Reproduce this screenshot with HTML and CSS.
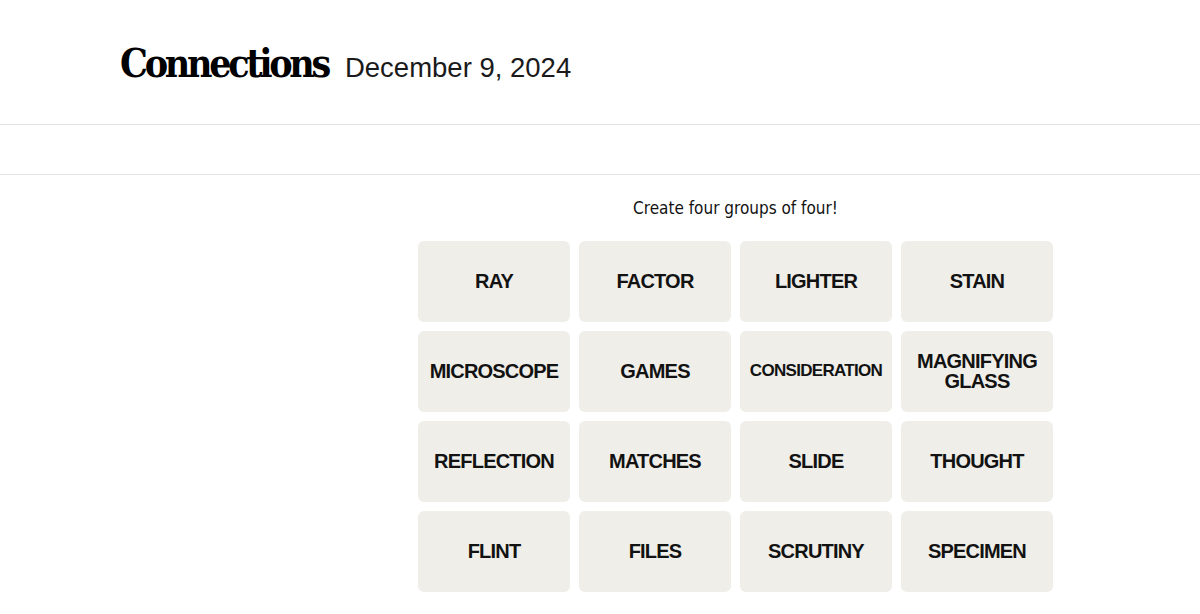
FILE: index.html
```html
<!DOCTYPE html>
<html lang="en">
<head>
<meta charset="utf-8">
<title>Connections</title>
<link rel="stylesheet" href="styles.css">
</head>
<body>
<header class="masthead">
  <div class="masthead-inner">
    <h1 class="title">Connections</h1>
    <span class="date">December 9, 2024</span>
  </div>
</header>
<div class="toolbar"></div>
<main class="board">
  <p class="prompt">Create four groups of four!</p>
  <div class="grid">
    <div class="tile">RAY</div>
    <div class="tile">FACTOR</div>
    <div class="tile">LIGHTER</div>
    <div class="tile">STAIN</div>
    <div class="tile">MICROSCOPE</div>
    <div class="tile">GAMES</div>
    <div class="tile tile-small">CONSIDERATION</div>
    <div class="tile">MAGNIFYING<br>GLASS</div>
    <div class="tile">REFLECTION</div>
    <div class="tile">MATCHES</div>
    <div class="tile">SLIDE</div>
    <div class="tile">THOUGHT</div>
    <div class="tile">FLINT</div>
    <div class="tile">FILES</div>
    <div class="tile">SCRUTINY</div>
    <div class="tile">SPECIMEN</div>
  </div>
</main>
</body>
</html>
```
FILE: styles.css
```css
* { box-sizing: border-box; }
html, body {
  margin: 0;
  padding: 0;
  background: #ffffff;
  color: #121212;
  font-family: "Liberation Sans", Arial, sans-serif;
}
.masthead {
  height: 125px;
  border-bottom: 1px solid #e3e3e3;
}
.masthead-inner {
  display: flex;
  align-items: baseline;
  padding: 41px 0 0 120px;
  gap: 17px;
}
.title {
  margin: 0;
  font-family: "DejaVu Serif", "Liberation Serif", serif;
  font-stretch: condensed;
  font-weight: 700;
  font-size: 39px;
  line-height: 44px;
  letter-spacing: -3.3px;
  color: #000;
}
.date {
  font-family: "Liberation Sans", Arial, sans-serif;
  font-size: 27.5px;
  line-height: 44px;
  color: #1a1a1a;
}
.toolbar {
  height: 50px;
  border-bottom: 1px solid #e3e3e3;
}
.board {
  width: 635px;
  margin-left: 418px;
  padding-top: 21px;
}
.prompt {
  margin: 0 0 21px;
  text-align: center;
  font-family: "DejaVu Sans", sans-serif;
  font-stretch: condensed;
  font-size: 17px;
  line-height: 24px;
  color: #121212;
}
.grid {
  display: grid;
  grid-template-columns: repeat(4, 1fr);
  grid-auto-rows: 81px;
  gap: 9px;
}
.tile {
  display: flex;
  align-items: center;
  justify-content: center;
  text-align: center;
  padding-bottom: 2px;
  background: #efeee9;
  border-radius: 6px;
  font-family: "Liberation Sans", Arial, sans-serif;
  font-weight: 700;
  font-size: 20px;
  line-height: 20px;
  letter-spacing: -0.8px;
  color: #121212;
}
.tile-small {
  font-size: 17px;
  letter-spacing: -0.7px;
}
```
